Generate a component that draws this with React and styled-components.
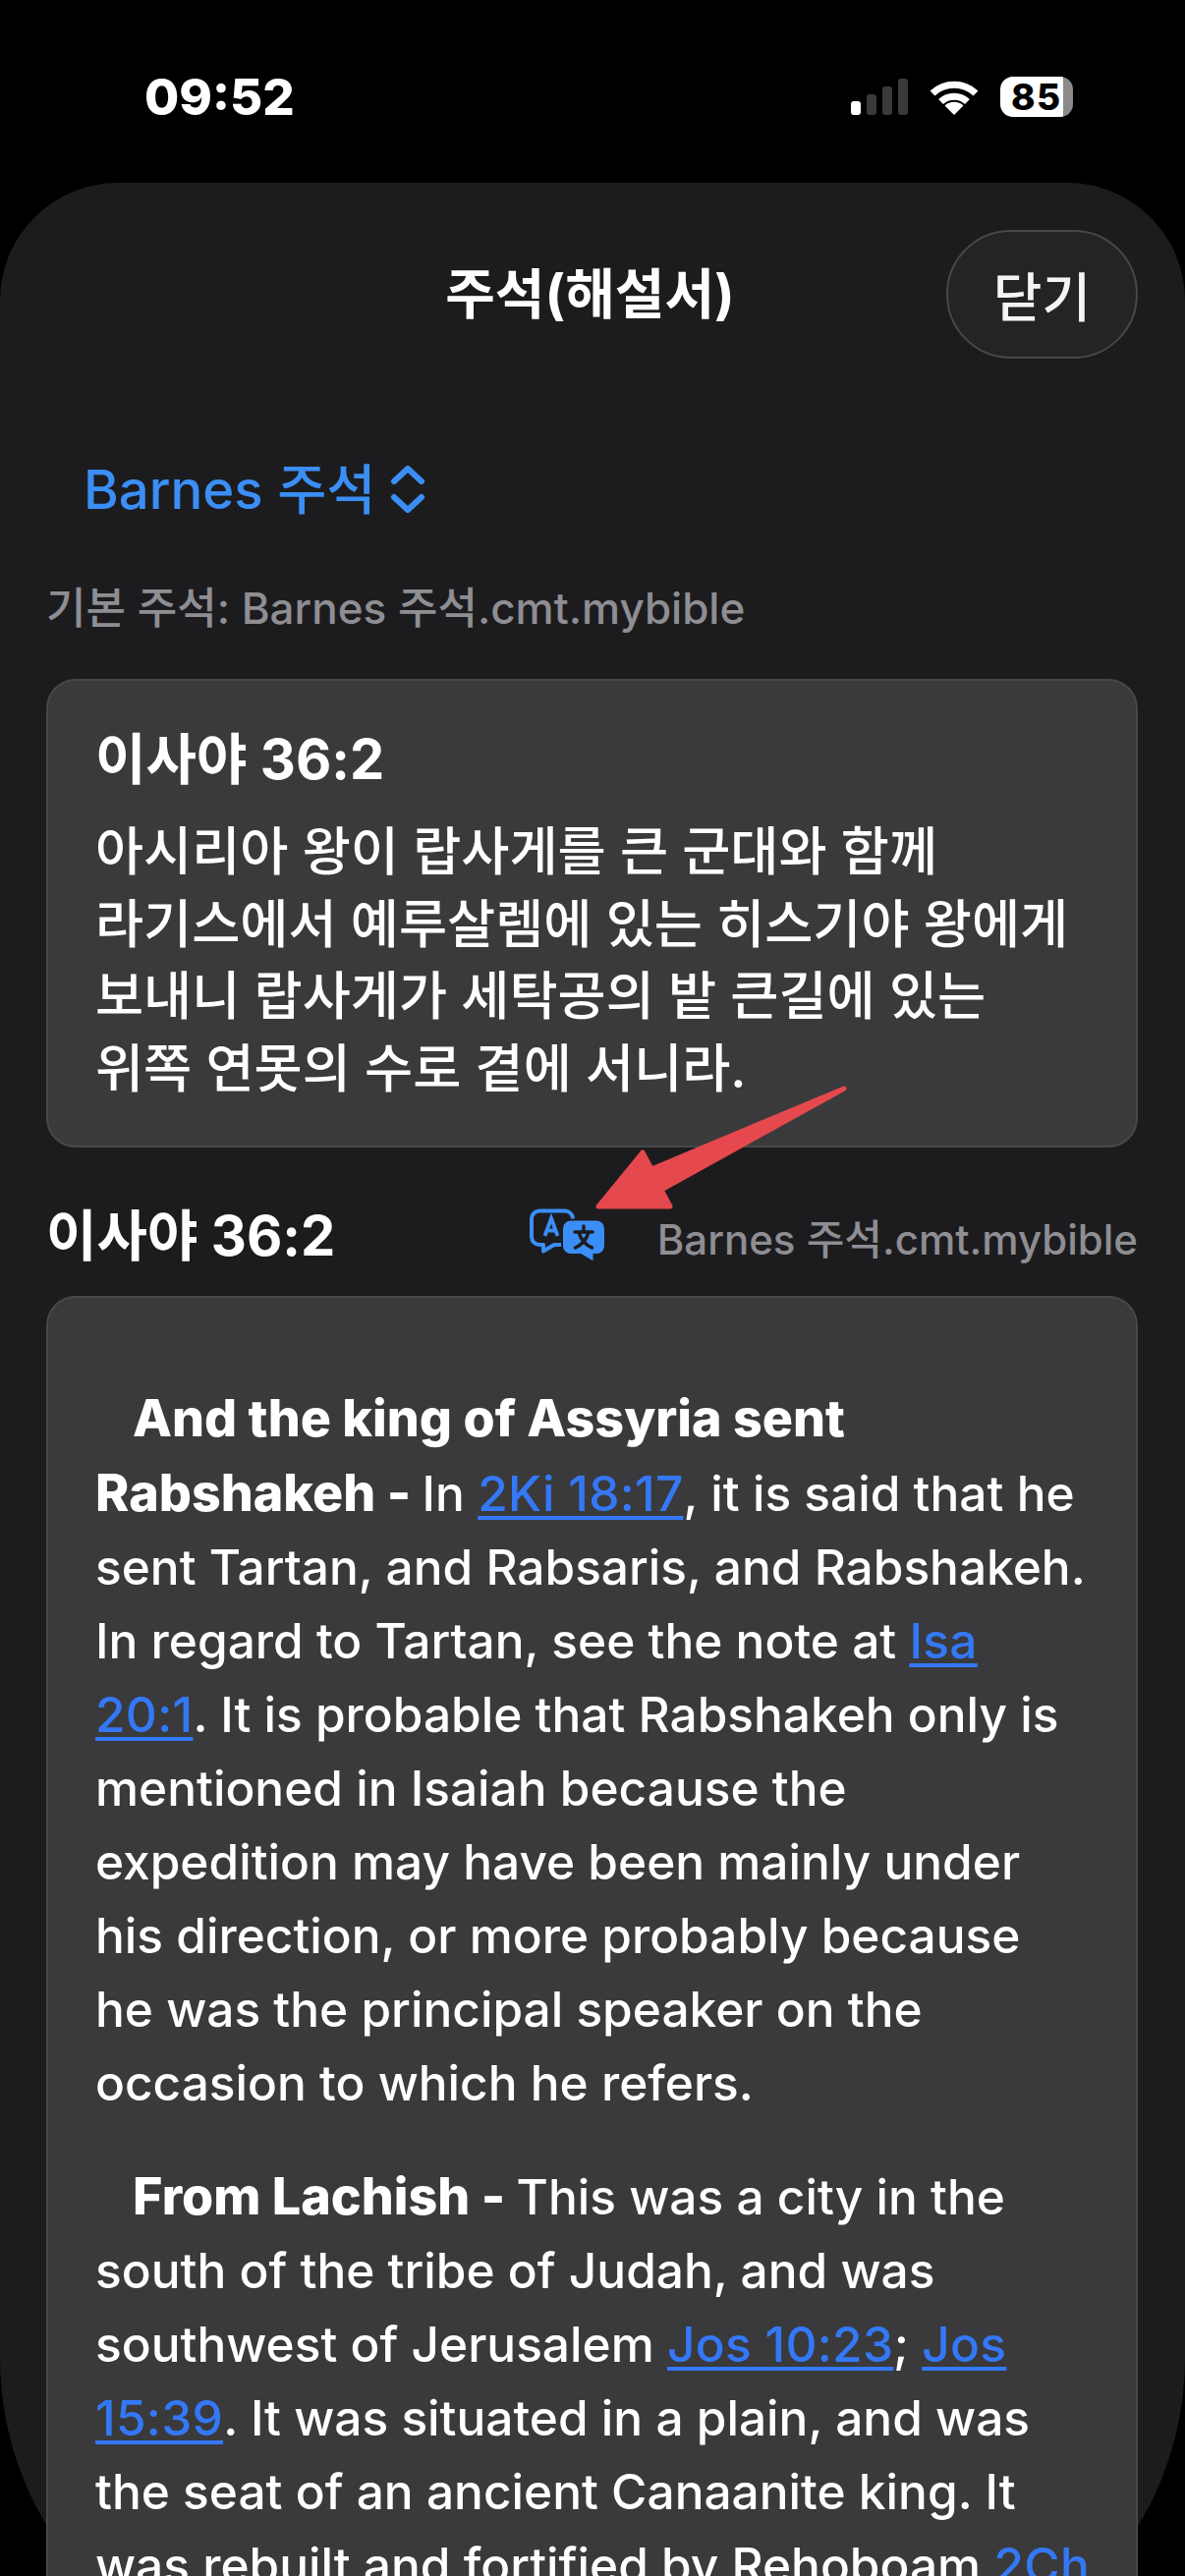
import React from "react";
import styled, { createGlobalStyle } from "styled-components";

const GlobalStyle = createGlobalStyle`
  html, body {
    margin: 0;
    padding: 0;
    background: #000;
  }
`;

const FONT = `Inter, "Noto Sans CJK KR", sans-serif`;

const Screen = styled.div`
  position: relative;
  width: 1206px;
  height: 2622px;
  overflow: hidden;
  background: #000;
  font-family: ${FONT};
  color: #fff;
`;

const StatusBar = styled.div`
  box-sizing: border-box;
  height: 186px;
  padding: 10px 114px 0 147px;
  display: flex;
  align-items: center;
  justify-content: space-between;
`;

const Time = styled.div`
  font-size: 51px;
  font-weight: 800;
`;

const StatusIcons = styled.div`
  display: flex;
  align-items: center;
  gap: 22px;
`;

const Signal = styled.div`
  display: flex;
  align-items: flex-end;
  gap: 6px;
  height: 37px;
`;

const SignalBar = styled.span`
  width: 10px;
  height: ${(p) => p.$h}px;
  border-radius: 3px;
  background: ${(p) => (p.$on ? "#fff" : "#3a3a3a")};
`;

const Battery = styled.div`
  position: relative;
  box-sizing: border-box;
  width: 74px;
  height: 41px;
  border-radius: 13px;
  background: linear-gradient(to right, #fff 0, #fff 64px, #8a8a8a 64px);
  color: #000;
  font-size: 37px;
  font-weight: 800;
  line-height: 41px;
  padding-left: 11px;
  letter-spacing: 1.5px;

  ::after {
    content: "";
    position: absolute;
    left: 77px;
    top: 15px;
    width: 5px;
    height: 11px;
    border-radius: 0 6px 6px 0;
    background: #8a8a8a;
  }
`;

const Sheet = styled.div`
  box-sizing: border-box;
  height: 2544px;
  padding: 48px 48px 0 47px;
  background: #1c1c1e;
  border-radius: 120px 120px 330px 330px;
`;

const Header = styled.div`
  display: grid;
  grid-template-columns: 1fr auto 1fr;
  align-items: center;
`;

const Title = styled.div`
  grid-column: 2;
  font-size: 55px;
  line-height: 80px;
  font-weight: 700;
  margin: -1px 0 0 -4px;
`;

const CloseButton = styled.button`
  grid-column: 3;
  justify-self: end;
  box-sizing: border-box;
  width: 195px;
  height: 131px;
  border-radius: 66px;
  border: 2px solid #48484a;
  background: #242426;
  color: #f4f4f4;
  font-family: ${FONT};
  font-size: 54px;
  font-weight: 500;
  padding: 0;
`;

const Picker = styled.div`
  margin: 98px 0 0 38px;
  display: flex;
  align-items: center;
  gap: 15px;
  color: #3b8ef5;
  font-size: 54.5px;
  font-weight: 500;
  line-height: 70px;
`;

const DefaultLabel = styled.div`
  margin-top: 58px;
  color: #8e8e93;
  font-size: 44px;
  font-weight: 500;
  line-height: 56px;
`;

const Card = styled.div`
  box-sizing: border-box;
  border: 2px solid #48484a;
  border-radius: 30px;
  background: #3a3a3c;
  padding: ${(p) => p.$pad};
`;

const VerseCard = styled(Card)`
  margin-top: 44px;
`;

const Reference = styled.div`
  font-size: 56px;
  line-height: 72px;
  font-weight: 700;
`;

const VerseText = styled.div`
  margin-top: 21px;
  font-size: 53.4px;
  font-weight: 500;
  line-height: 73.5px;
  white-space: nowrap;
`;

const CommentHeader = styled.div`
  margin-top: 54px;
  height: 72px;
  display: flex;
  align-items: center;
`;

const SourceName = styled.div`
  margin-left: 52px;
  color: #8e8e93;
  font-size: 42px;
  font-weight: 500;
  white-space: nowrap;
`;

const TranslateButton = styled.div`
  margin-left: auto;
  display: flex;
`;

const CommentCard = styled(Card)`
  margin-top: 25px;
`;

const Paragraph = styled.p`
  margin: 0 0 40px;
  font-size: 49.6px;
  font-weight: 500;
  line-height: 75px;
  white-space: nowrap;
`;

const Lead = styled.strong`
  font-size: 52px;
  font-weight: 800;
  margin-left: 38px;
`;

const Bold = styled.strong`
  font-size: 52px;
  font-weight: 800;
`;

const VerseLink = styled.a`
  color: #3478f6;
  letter-spacing: 0.3px;
  text-decoration: underline;
  text-decoration-thickness: 4px;
  text-underline-offset: 5px;
`;

const Arrow = styled.svg`
  position: absolute;
  left: 600px;
  top: 1100px;
`;

const Chevrons = () => (
  <svg width="36" height="48" viewBox="0 0 36 48" fill="none" stroke="#3b8ef5" strokeWidth="6" strokeLinecap="round" strokeLinejoin="round">
    <path d="M4 16 L18 3 L32 16" />
    <path d="M4 32 L18 45 L32 32" />
  </svg>
);

const Wifi = () => (
  <svg width="50" height="37" viewBox="0 0 50 37" fill="none" stroke="#fff" strokeWidth="7">
    <path d="M3 15 A32 32 0 0 1 47 15" />
    <path d="M11.5 23.5 A20 20 0 0 1 38.5 23.5" />
    <path d="M25 37 L15.5 27.5 A14 14 0 0 1 34.5 27.5 Z" fill="#fff" stroke="none" />
  </svg>
);

const TranslateIcon = () => (
  <svg width="78" height="57" viewBox="0 0 78 57" fill="none">
    <path
      d="M10 2.5 H36 A8 8 0 0 1 44 10.5 V29 A8 8 0 0 1 36 37 H25 L14 43.5 V37 H10 A8 8 0 0 1 2 29 V10.5 A8 8 0 0 1 10 2.5 Z"
      stroke="#3b8ef5"
      strokeWidth="4"
      strokeLinejoin="round"
    />
    <path d="M15.5 28 L22 10 L28.5 28 M18 22.5 H26" stroke="#3b8ef5" strokeWidth="3.8" />
    <path
      d="M42 11.5 H68 A9 9 0 0 1 77 20.5 V38 A9 9 0 0 1 68 47 H65.5 V55 L52 47 H42 A9 9 0 0 1 33 38 V20.5 A9 9 0 0 1 42 11.5 Z"
      fill="#3b8ef5"
      stroke="#1c1c1e"
      strokeWidth="2"
    />
    <path
      d="M55 18 V23 M46 24 H64 M50 24 C52 32 57 37 63.5 40 M60 24 C58 32 53 37 46.5 40"
      stroke="#1c1c1e"
      strokeWidth="3.4"
      strokeLinecap="round"
    />
  </svg>
);

const App = () => {
  return (
    <Screen>
      <GlobalStyle />
      <StatusBar>
        <Time>09:52</Time>
        <StatusIcons>
          <Signal>
            <SignalBar $h={14} $on />
            <SignalBar $h={21} />
            <SignalBar $h={29} />
            <SignalBar $h={37} />
          </Signal>
          <Wifi />
          <Battery>85</Battery>
        </StatusIcons>
      </StatusBar>

      <Sheet>
        <Header>
          <Title>주석(해설서)</Title>
          <CloseButton>닫기</CloseButton>
        </Header>

        <Picker>
          Barnes 주석
          <Chevrons />
        </Picker>
        <DefaultLabel>기본 주석: Barnes 주석.cmt.mybible</DefaultLabel>

        <VerseCard $pad="44px 48px 42px">
          <Reference>이사야 36:2</Reference>
          <VerseText>
            아시리아 왕이 랍사게를 큰 군대와 함께
            <br />
            라기스에서 예루살렘에 있는 히스기야 왕에게
            <br />
            보내니 랍사게가 세탁공의 밭 큰길에 있는
            <br />
            위쪽 연못의 수로 곁에 서니라.
          </VerseText>
        </VerseCard>

        <CommentHeader>
          <Reference>이사야 36:2</Reference>
          <TranslateButton>
            <TranslateIcon />
          </TranslateButton>
          <SourceName>Barnes 주석.cmt.mybible</SourceName>
        </CommentHeader>

        <CommentCard $pad="85px 48px 60px">
          <Paragraph>
            <Lead>And the king of Assyria sent</Lead>
            <br />
            <Bold>Rabshakeh - </Bold>In <VerseLink>2Ki 18:17</VerseLink>, it is said that he
            <br />
            sent Tartan, and Rabsaris, and Rabshakeh.
            <br />
            In regard to Tartan, see the note at <VerseLink>Isa</VerseLink>
            <br />
            <VerseLink>20:1</VerseLink>. It is probable that Rabshakeh only is
            <br />
            mentioned in Isaiah because the
            <br />
            expedition may have been mainly under
            <br />
            his direction, or more probably because
            <br />
            he was the principal speaker on the
            <br />
            occasion to which he refers.
          </Paragraph>
          <Paragraph>
            <Lead>From Lachish - </Lead>This was a city in the
            <br />
            south of the tribe of Judah, and was
            <br />
            southwest of Jerusalem <VerseLink>Jos 10:23</VerseLink>; <VerseLink>Jos</VerseLink>
            <br />
            <VerseLink>15:39</VerseLink>. It was situated in a plain, and was
            <br />
            the seat of an ancient Canaanite king. It
            <br />
            was rebuilt and fortified by Rehoboam <VerseLink>2Ch</VerseLink>
          </Paragraph>
        </CommentCard>
      </Sheet>

      <Arrow width="270" height="140" viewBox="600 1100 270 140">
        <path
          d="M859 1108 L663 1190 L654 1173 L609 1228 L682 1228 L673 1211 L859 1108 Z"
          fill="#e5484d"
          stroke="#e5484d"
          strokeWidth="5"
          strokeLinejoin="round"
        />
      </Arrow>
    </Screen>
  );
};

export default App;
